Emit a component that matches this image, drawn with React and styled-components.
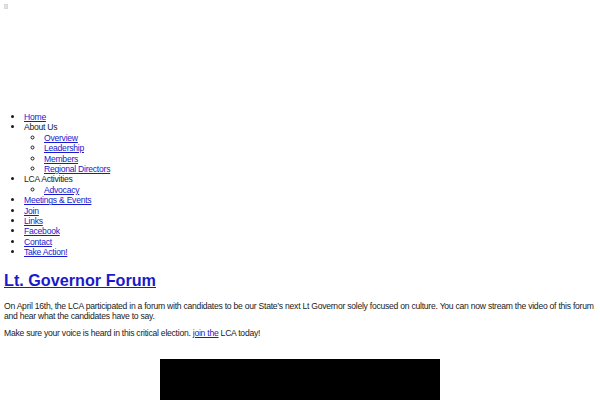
import React from "react";
import styled, { createGlobalStyle } from "styled-components";

const Global = createGlobalStyle`
  html, body { background: #fff; }
  body {
    margin: 4px;
    font-family: "Liberation Sans", Arial, sans-serif;
    font-size: 8.6px;
    letter-spacing: -0.25px;
    line-height: 10.4px;
    color: #1a1a1a;
  }
  a { color: #1a1acc; text-decoration: underline; }
`;

const Header = styled.div`
  height: 99px;
`;

const BrokenImg = styled.span`
  display: block;
  width: 4px;
  height: 5px;
  background: #e4e4e4;
  border: 1px solid #d8d8d8;
  box-sizing: border-box;
`;

const Menu = styled.ul`
  margin: ${(p) => (p.$sub ? "0" : "9px 0")};
  padding-left: 20px;
  list-style: ${(p) => (p.$sub ? "circle" : "disc")};
`;

const Item = styled.li`
  line-height: 10.4px;
  &::marker {
    font-size: 9.5px;
  }
`;

const Title = styled.h2`
  font-size: 16.2px;
  letter-spacing: 0;
  line-height: 20px;
  font-weight: bold;
  margin: 12px 0 11px;
  a { color: #1a1acc; }
`;

const Para = styled.p`
  margin: 6px 0;
  line-height: 10.4px;
`;

const VideoWrap = styled.div`
  display: flex;
  justify-content: center;
  margin-top: 21px;
`;

const Video = styled.div`
  width: 280px;
  height: 160px;
  background: #000;
`;

export default function App() {
  return (
    <>
      <Global />
      <Header>
        <BrokenImg />
      </Header>
      <nav>
        <Menu>
          <Item><a href="#">Home</a></Item>
          <Item>
            About Us
            <Menu $sub>
              <Item><a href="#">Overview</a></Item>
              <Item><a href="#">Leadership</a></Item>
              <Item><a href="#">Members</a></Item>
              <Item><a href="#">Regional Directors</a></Item>
            </Menu>
          </Item>
          <Item>
            LCA Activities
            <Menu $sub>
              <Item><a href="#">Advocacy</a></Item>
            </Menu>
          </Item>
          <Item><a href="#">Meetings &amp; Events</a></Item>
          <Item><a href="#">Join</a></Item>
          <Item><a href="#">Links</a></Item>
          <Item><a href="#">Facebook</a></Item>
          <Item><a href="#">Contact</a></Item>
          <Item><a href="#">Take Action!</a></Item>
        </Menu>
      </nav>
      <Title><a href="#">Lt. Governor Forum</a></Title>
      <Para>
        On April 16th, the LCA participated in a forum with candidates to be our State’s next Lt Governor solely focused on culture. You can now stream the video of this forum and hear what the candidates have to say.
      </Para>
      <Para>
        Make sure your voice is heard in this critical election. <a href="#">join the</a> LCA today!
      </Para>
      <VideoWrap>
        <Video />
      </VideoWrap>
    </>
  );
}
